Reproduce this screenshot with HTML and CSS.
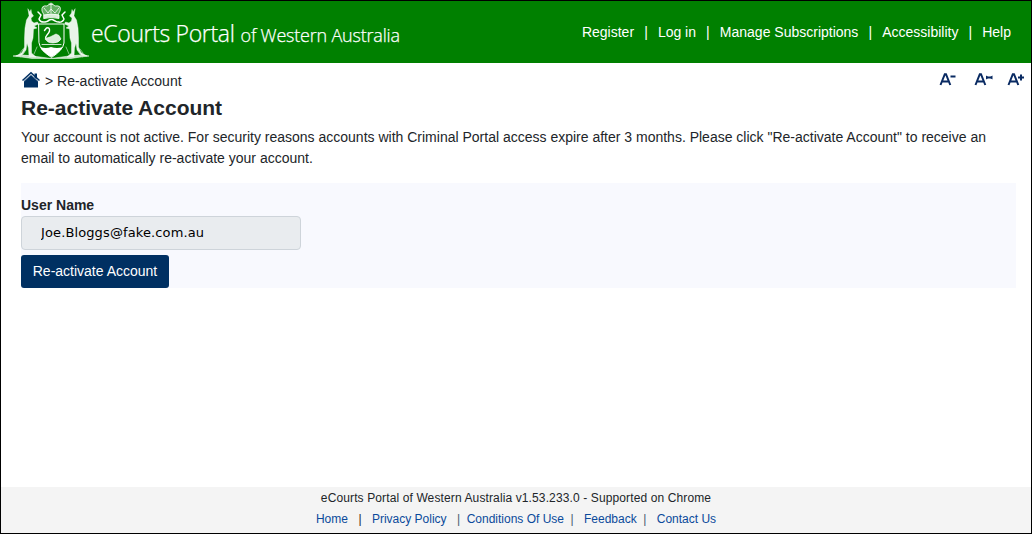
FILE: index.html
```html
<!DOCTYPE html>
<html lang="en">
<head>
<meta charset="utf-8">
<title>Re-activate Account - eCourts Portal</title>
<link rel="stylesheet" href="styles.css">
</head>
<body>
<div class="page">
  <header class="header">
    <svg class="crest" viewBox="0 0 78 60" width="78" height="60" fill="none" stroke="#fff" stroke-linecap="round" stroke-linejoin="round">
      <path d="M0 55 Q10 53 20 55 L38 57.500 L56 55 Q67 53 76 55 Q66 56 58 57.500 H19 Q10 56 0 55Z" fill="#c4e1c4" stroke-width=".5"/>
      <g stroke-width=".4" fill="#e8f4e8">
        <path d="M15 8 L17 11 L18 8.500 L18.500 12 L20.500 15 L18 17 L18.500 20 L21 22 L24.500 21 L25.500 23 L21 25 L24 27 L20.500 28 L20 37 L18.500 42 L18.500 52 L23 56 L16 55.500 L15.500 47 L14 42 L13 49 L9 54 L3 55 L9 51.500 L11.500 46 L11.500 37 L12 27 L13.500 19 L16 15Z"/>
        <path d="M62 8 L60 11 L59 8.500 L58.500 12 L56.500 15 L59 17 L58.500 20 L56 22 L52.500 21 L51.500 23 L56 25 L53 27 L56.500 28 L57 37 L58.500 42 L58.500 52 L54 56 L61 55.500 L61.500 47 L63 42 L64 49 L68 54 L74 55 L68 51.500 L65.500 46 L65.500 37 L65 27 L63.500 19 L61 15Z"/>
      </g>
      <path d="M7 52 L10 48 M8 56 L12 50 M70 52 L67 48 M69 56 L65 50 M21 53 L24 46 M56 53 L53 46" stroke-width=".7" stroke="#b9dab9"/>
      <path d="M26 23 H51 V42 Q50 49 38.500 56.500 Q27 49 26 42Z" fill="#078307" stroke-width="1"/>
      <path d="M27 46 Q33 48 38 46 Q44 48 50 46 Q47 51 38.500 56 Q29 51 27 46Z" fill="#fff" stroke="none"/>
      <path d="M31.500 29.500 L33.500 27 Q37 26 36.500 30 Q36 32 34 34 Q32 36 33 38" stroke-width="1.400"/>
      <path d="M32.500 38 Q35 36 37 36 L43 33 L46 34.500 L48 38 Q46 42 40 42 Q34 42 32.500 38Z" fill="#dceedc" stroke-width=".6"/>
      <path d="M29 43.500 H48" stroke-width=".8"/>
      <g stroke-width=".8">
        <path d="M31 14 L29 10 Q28 4 34 5 Q38 1 42 5 Q49 4 47 10 L45 14 Z" fill="#62b062"/>
        <path d="M31 14 Q38 12 46 14 V17.500 Q38 15.500 31 17.500Z" fill="#d8edd8"/>
        <path d="M38 2 V12 M36 3 H40 M31 7 L35 12 L38 8 L42 12 L46 7" stroke-dasharray="1.500 .7"/>
        <path d="M26 18 Q28 23 35 20 Q38 17 42 20 Q49 23 51 18 M25 11 L28 14 L26 18 M52 11 L49 14 L51 18" stroke-width="1.500" stroke-dasharray="2.500 .6"/>
      </g>
    </svg>
    <div class="brand"><span class="brand-name">eCourts Portal</span><span class="brand-place">of Western Australia</span></div>
    <nav class="nav">
      <a>Register</a><i>|</i><a>Log in</a><i>|</i><a>Manage Subscriptions</a><i>|</i><a>Accessibility</a><i>|</i><a>Help</a>
    </nav>
  </header>
  <main class="main">
    <div class="topline">
      <div class="crumbs">
        <svg class="home" viewBox="0 0 20 18" width="20" height="18"><path d="M13.500 2.500h2.500v5h-2.500z" fill="#003366"/><path d="M3 10 10 3.500 17 10V16.500H3Z" fill="#003062"/><path d="M1.500 9.500 10 1.800 18.500 9.500" fill="none" stroke="#003062" stroke-width="1.500"/><path d="M3 10.300 10 4 17 10.300" fill="none" stroke="#9eb3c8" stroke-width=".6"/></svg>
        <span>&gt; Re-activate Account</span>
      </div>
      <div class="sizes">
        <svg viewBox="0 0 18 14" width="18" height="14"><path d="M1.500 13 5.800 2.200H7L11.300 13M3.500 9.500H9.500M11.500 4.500H16.500"/></svg>
        <svg viewBox="0 0 20 14" width="20" height="14"><path d="M1.500 13 5.800 2.200H7L11.300 13M3.500 9.500H9.500M12 5.500H18"/><path class="tips" d="M12 3.500 15 5.500 12 7.500ZM18.500 3.500 15.500 5.500 18.500 7.500Z"/></svg>
        <svg viewBox="0 0 18 14" width="18" height="14"><path d="M1.500 13 5.800 2.200H7L11.300 13M3.500 9.500H9.500M11 5.500H17M14 2.500V8.500"/></svg>
      </div>
    </div>
    <h1 class="title">Re-activate Account</h1>
    <p class="intro">Your account is not active. For security reasons accounts with Criminal Portal access expire after 3 months. Please click "Re-activate Account" to receive an email to automatically re-activate your account.</p>
    <form class="panel">
      <label class="label" for="user">User Name</label>
      <input class="field" id="user" value="Joe.Bloggs@fake.com.au" readonly>
      <button class="button" type="button">Re-activate Account</button>
    </form>
  </main>
  <footer class="footer">
    <div class="version">eCourts Portal of Western Australia v1.53.233.0 - Supported on Chrome</div>
    <div class="links"><a>Home</a><i class="wide">|</i><a>Privacy Policy</a><i class="before">|</i><a>Conditions Of Use</a><i class="after">|</i><a>Feedback</a><i class="after">|</i><a>Contact Us</a></div>
  </footer>
</div>
</body>
</html>
```
FILE: styles.css
```css
* { box-sizing: border-box; }
body { margin: 0; font: 14px/21px "Liberation Sans", Arial, sans-serif; color: #212529; background: #fff; }
i { font-style: normal; }
.page { height: 534px; border: 1px solid #000; display: flex; flex-direction: column; }
.header { height: 62px; background: #008000; color: #fff; display: flex; align-items: flex-start; padding: 0 20px 0 12px; }
.crest { flex: none; }
.brand { font-family: "Open Sans", "Noto Sans", sans-serif; font-weight: 300; -webkit-text-stroke: .25px #fff; line-height: 32px; padding-top: 16px; white-space: nowrap; display: flex; align-items: baseline; gap: 6px; }
.brand-name { font-size: 23px; letter-spacing: -.34px; }
.brand-place { font-size: 18px; letter-spacing: -.2px; }
.nav { margin-left: auto; padding-top: 21px; display: flex; white-space: nowrap; }
.nav i { width: 23.8px; text-align: center; }
.main { flex: 1; padding: 8px 15px 0 20px; }
.topline { display: flex; justify-content: space-between; height: 20px; }
.crumbs { display: flex; gap: 4px; line-height: 20px; }
.sizes { display: flex; gap: 15.5px; margin-right: -9px; padding-top: 1px; }
.sizes svg { fill: none; stroke: #092a62; stroke-width: 2; }
.sizes svg:first-child { margin-right: 1px; }
.sizes svg:nth-child(2) { margin-right: -2px; }
.sizes .tips { fill: #092a62; stroke: none; }
.title { margin: 4px 0 7px; font-size: 21px; line-height: 25px; }
.intro { margin: 0; width: 985px; line-height: 21px; }
.panel { margin-top: 14px; height: 105px; background: #f8f9fe; display: flex; flex-direction: column; align-items: flex-start; padding-top: 12px; }
.label { font-weight: bold; line-height: 21px; }
.field { width: 280px; height: 34px; padding: 0 19px 2px; background: #e9ecef; border: 1px solid #ced4da; border-radius: 4px; font: 13px "DejaVu Sans", sans-serif; letter-spacing: .12px; color: #000; }
.button { margin-top: 5px; width: 148px; height: 33px; padding: 0 0 2px; background: #003062; border: 0; border-radius: 3px; font: 14px "Liberation Sans", Arial, sans-serif; color: #fff; }
.footer { height: 46px; padding-top: 1px; background: #f4f4f4; font-size: 12px; line-height: 21px; text-align: center; }
.version { letter-spacing: .12px; }
.links { display: flex; justify-content: center; color: #0b4a9b; white-space: nowrap; }
.links i { color: #475b70; }
.links .wide { width: 24px; color: #212529; }
.links .before { width: 20px; padding-left: 4px; }
.links .after { width: 20px; padding-right: 4px; }
```
